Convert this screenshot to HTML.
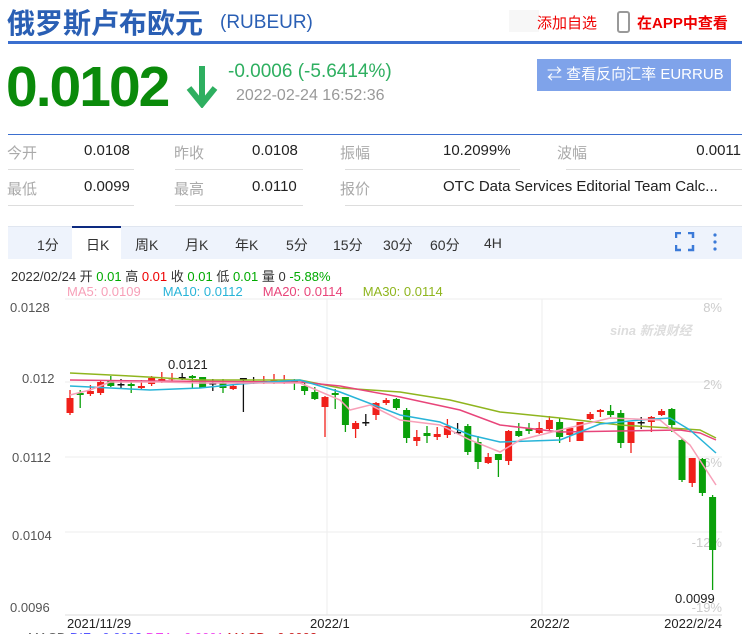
<!DOCTYPE html>
<html><head><meta charset="utf-8"><style>
*{margin:0;padding:0;box-sizing:border-box}
body{width:751px;height:634px;overflow:hidden;background:#fff;font-family:"Liberation Sans","Noto Sans CJK SC",sans-serif;position:relative}
.a{position:absolute;white-space:nowrap}
</style></head><body>
<div class="a" style="left:7px;top:2px;font-size:28px;font-weight:bold;color:#2a5fb4;letter-spacing:0">俄罗斯卢布欧元</div>
<div class="a" style="left:220px;top:12px;font-size:19px;color:#2a5fb4">(RUBEUR)</div>
<div class="a" style="left:509px;top:10px;width:30px;height:22px;background:#f7f7f7"></div>
<div class="a" style="left:537px;top:12px;font-size:15px;color:#e00">添加自选</div>
<div class="a" style="left:617px;top:11px;width:13px;height:22px;border:2px solid #999;border-radius:3px"></div>
<div class="a" style="left:637px;top:12px;font-size:15px;color:#e00;font-weight:bold">在APP中查看</div>
<div class="a" style="left:8px;top:41px;width:734px;height:3px;background:#3b6fcf"></div>
<div class="a" style="left:6px;top:54px;font-size:57px;font-weight:bold;color:#0a8a0a;letter-spacing:-2px">0.0102</div>
<svg class="a" style="left:186px;top:64px" width="32" height="44"><path d="M16 2V38" stroke="#2eaf60" stroke-width="6"/><path d="M3 24L16 40L29 24" fill="none" stroke="#2eaf60" stroke-width="6"/></svg>
<div class="a" style="left:228px;top:61px;font-size:19px;color:#2eaf60">-0.0006 (-5.6414%)</div>
<div class="a" style="left:236px;top:87px;font-size:16px;color:#999">2022-02-24 16:52:36</div>
<div class="a" style="left:537px;top:59px;width:194px;height:32px;background:#7fa3ea;color:#fff;font-size:15px;line-height:32px;padding-left:10px">⇄ 查看反向汇率 EURRUB</div>
<div class="a" style="left:8px;top:134px;width:734px;height:1px;background:#3b6fcf"></div>
<div class="a" style="top:142px;left:0;font-size:15px;width:751px;height:70px">
<span class="a" style="left:7px;color:#aaa">今开</span><span class="a" style="left:84px;color:#222">0.0108</span>
<span class="a" style="left:174px;color:#aaa">昨收</span><span class="a" style="left:252px;color:#222">0.0108</span>
<span class="a" style="left:340px;color:#aaa">振幅</span><span class="a" style="left:443px;color:#222">10.2099%</span>
<span class="a" style="left:557px;color:#aaa">波幅</span><span class="a" style="right:10px;color:#222">0.0011</span>
<span class="a" style="left:7px;top:36px;color:#aaa">最低</span><span class="a" style="left:84px;top:36px;color:#222">0.0099</span>
<span class="a" style="left:174px;top:36px;color:#aaa">最高</span><span class="a" style="left:252px;top:36px;color:#222">0.0110</span>
<span class="a" style="left:340px;top:36px;color:#aaa">报价</span><span class="a" style="left:443px;top:36px;color:#222">OTC Data Services Editorial Team Calc...</span>
</div>
<div class="a" style="left:8px;top:169px;width:126px;height:1px;background:#ddd"></div>
<div class="a" style="left:175px;top:169px;width:128px;height:1px;background:#ddd"></div>
<div class="a" style="left:345px;top:169px;width:175px;height:1px;background:#ddd"></div>
<div class="a" style="left:566px;top:169px;width:176px;height:1px;background:#ddd"></div>
<div class="a" style="left:8px;top:205px;width:126px;height:1px;background:#ddd"></div>
<div class="a" style="left:175px;top:205px;width:128px;height:1px;background:#ddd"></div>
<div class="a" style="left:345px;top:205px;width:397px;height:1px;background:#ddd"></div>
<div class="a" style="left:8px;top:226px;width:734px;height:33px;background:#eef3fc;border-top:1px solid #e0e6f0"></div>
<div class="a" style="left:72px;top:226px;width:49px;height:33px;background:#fff;border-top:2px solid #0d2a80"></div>
<div class="a" style="top:235px;left:0;font-size:14px;color:#333">
<span class="a" style="left:37px">1分</span><span class="a" style="left:86px">日K</span><span class="a" style="left:135px">周K</span><span class="a" style="left:185px">月K</span><span class="a" style="left:235px">年K</span><span class="a" style="left:286px">5分</span><span class="a" style="left:333px">15分</span><span class="a" style="left:383px">30分</span><span class="a" style="left:430px">60分</span><span class="a" style="left:484px">4H</span></div>
<svg class="a" style="left:675px;top:232px" width="45" height="20"><path d="M1 6V1H6M13 1H18V6M18 13V18H13M6 18H1V13" fill="none" stroke="#3b7ad8" stroke-width="2.5"/><circle cx="40" cy="3" r="1.6" fill="#3b7ad8"/><circle cx="40" cy="10" r="1.6" fill="#3b7ad8"/><circle cx="40" cy="17" r="1.6" fill="#3b7ad8"/></svg>
<div class="a" style="left:11px;top:266px;font-size:13px;color:#333">2022/02/24 开 <span style="color:#0a0">0.01</span> 高 <span style="color:#e00">0.01</span> 收 <span style="color:#0a0">0.01</span> 低 <span style="color:#0a0">0.01</span> 量 0 <span style="color:#0a0">-5.88%</span></div>
<div class="a" style="left:67px;top:284px;font-size:13px"><span style="color:#f7a0b8">MA5: 0.0109</span><span style="color:#28b4d8;margin-left:22px">MA10: 0.0112</span><span style="color:#e8457a;margin-left:20px">MA20: 0.0114</span><span style="color:#8fb51e;margin-left:20px">MA30: 0.0114</span></div>
<svg class="a" style="left:0;top:0" width="751" height="634" id="ch">
<g stroke="#eee" stroke-width="1"><line x1="65" y1="299" x2="722" y2="299"/><line x1="65" y1="382" x2="722" y2="382"/><line x1="65" y1="457" x2="722" y2="457"/><line x1="65" y1="532" x2="722" y2="532"/><line x1="327" y1="299" x2="327" y2="615"/><line x1="542" y1="299" x2="542" y2="615"/><line x1="65" y1="615" x2="722" y2="615" stroke="#ddd"/></g>
<text x="610" y="335" font-size="13" fill="#ddd" font-style="italic" font-weight="bold">sina 新浪财经</text>
<g font-size="13" fill="#555"><text x="10" y="312">0.0128</text><text x="22" y="383">0.012</text><text x="12" y="462">0.0112</text><text x="12" y="540">0.0104</text><text x="10" y="612">0.0096</text></g>
<g font-size="13" fill="#ccc" text-anchor="end"><text x="722" y="312">8%</text><text x="722" y="389">2%</text><text x="722" y="467">-6%</text><text x="722" y="547">-12%</text><text x="722" y="612">-19%</text></g>
<text x="168" y="369" font-size="13" fill="#222">0.0121</text>
<text x="675" y="603" font-size="13" fill="#222">0.0099</text>
<g font-size="13" fill="#222"><text x="67" y="628">2021/11/29</text><text x="310" y="628">2022/1</text><text x="530" y="628">2022/2</text><text x="722" y="628" text-anchor="end">2022/2/24</text></g>
<text x="28" y="642" font-size="13" fill="#666">MACD <tspan fill="#55f">DIF: -0.0002</tspan>   <tspan fill="#e4e">DEA: -0.0001</tspan>   <tspan fill="#c22">MACD: -0.0002</tspan></text>
<g id="cd"></g>
<g fill="none" stroke-width="1.5">
<polyline stroke="#8fb51e" points="70,373 130,376 200,380 300,380 340,388 400,392 450,400 500,412 560,418 620,425 670,428 700,430 716,438"/>
<polyline stroke="#e8457a" points="70,380 150,381 300,382 340,386 400,397 460,410 500,425 560,432 620,431 680,430 700,433 716,440"/>
<polyline stroke="#28b4d8" points="70,386 150,390 200,388 240,384 300,380 340,392 400,415 440,422 470,435 500,442 560,440 600,424 640,420 670,418 690,430 716,453"/>
<polyline stroke="#f7a0b8" points="70,395 90,390 110,382 160,382 200,383 300,383 340,400 350,410 370,405 400,420 440,425 470,440 500,452 520,440 560,430 610,418 660,420 690,445 716,485"/>
</g>
</svg>
<script>
var d=[
[398,413,390,415,'r'],[393,395,390,408,'g'],[391,394,385,396,'r'],[382,393,380,395,'r'],[381,386,376,387,'g'],[384,384,379,389,'k'],[384,386,381,393,'g'],[386,388,380,390,'r'],[378,384,376,386,'r'],[379,382,372,383,'r'],[378,379,373,382,'r'],[377,377,373,380,'k'],[376,378,375,388,'g'],[377,388,377,388,'g'],[383,383,379,391,'k'],[383,388,379,393,'g'],[386,389,384,390,'r'],[378,378,378,412,'k'],[382,382,377,384,'k'],[381,381,376,384,'r'],[380,382,374,384,'r'],[381,381,375,384,'r'],[380,382,379,390,'g'],[386,391,383,395,'g'],[392,399,387,400,'g'],[397,407,396,437,'r'],[393,395,389,409,'g'],[397,425,397,432,'g'],[423,429,421,438,'r'],[422,422,414,426,'k'],[403,415,402,420,'r'],[400,403,398,405,'r'],[399,408,398,410,'g'],
[410,438,408,443,'g'],[437,441,430,446,'r'],[433,436,426,443,'g'],[434,437,427,440,'r'],[426,435,419,438,'r'],[432,432,423,434,'k'],[426,452,424,455,'g'],[442,462,436,469,'g'],[457,463,453,464,'r'],[454,460,454,477,'g'],[431,461,430,465,'r'],[431,436,423,437,'g'],[428,431,423,434,'g'],[428,433,422,434,'r'],[420,429,416,430,'r'],[422,437,418,443,'g'],[428,435,427,442,'r'],[422,441,422,441,'r'],[414,419,412,420,'r'],[410,412,409,417,'r'],[411,415,405,417,'g'],[413,443,410,448,'g'],[422,443,422,453,'r'],[422,422,417,429,'k'],[417,422,416,432,'r'],[411,415,409,416,'r'],[409,425,408,432,'g'],[440,480,438,482,'g'],[458,483,458,487,'r'],[459,493,458,496,'g'],[497,550,495,590,'g']];
var s='',c={r:'#f0201a',g:'#0aa00a',k:'#111'};
d.forEach(function(v,i){var x=70+i*10.2,col=c[v[4]];s+='<line x1="'+x+'" y1="'+v[2]+'" x2="'+x+'" y2="'+v[3]+'" stroke="'+col+'" stroke-width="1.3"/>';var h=Math.max(v[1]-v[0],1.5);s+='<rect x="'+(x-3.5)+'" y="'+v[0]+'" width="7" height="'+h+'" fill="'+col+'"/>';});
document.getElementById('cd').innerHTML=s;
</script>
</body></html>
